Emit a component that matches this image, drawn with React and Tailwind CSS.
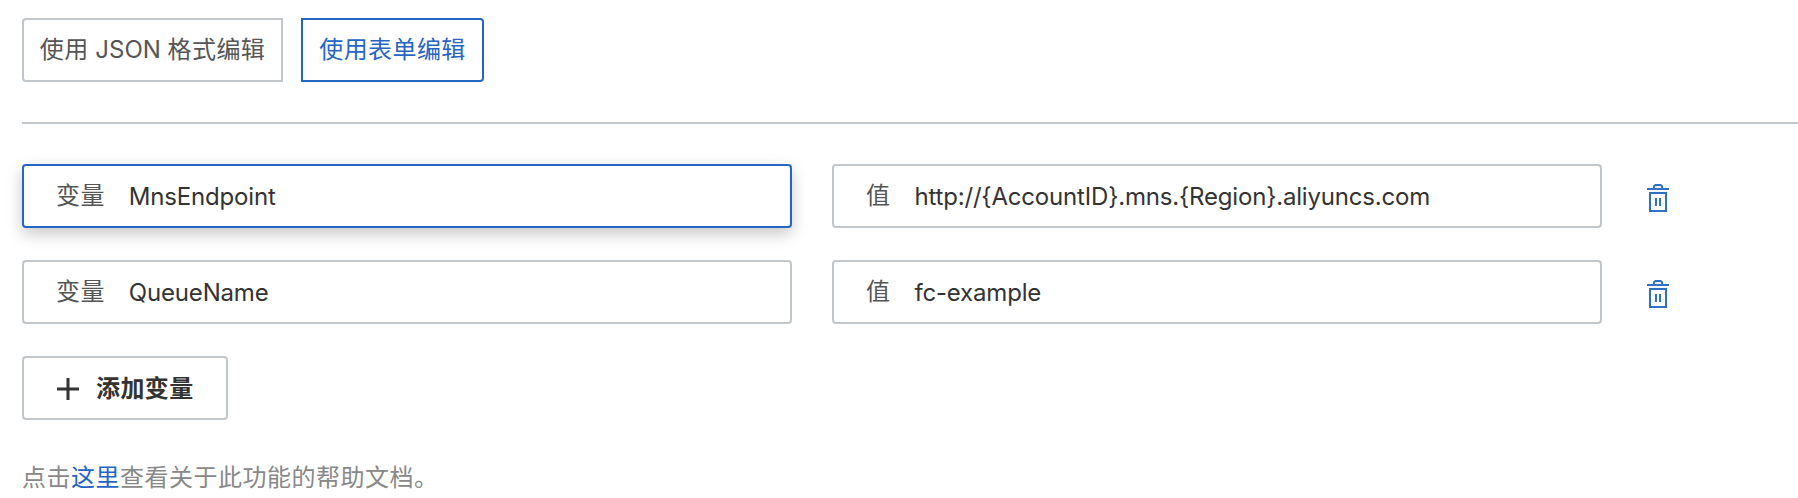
const rows = [
  { name: "MnsEndpoint", value: "http://{AccountID}.mns.{Region}.aliyuncs.com", focused: true },
  { name: "QueueName", value: "fc-example", focused: false },
];

function TrashIcon() {
  return (
    <svg width="22" height="28" viewBox="0 0 22 28" fill="none" stroke="#2f70c8" strokeWidth="2">
      <path d="M0 5h22" />
      <path d="M7 5V2.2L8.4 1h5.2L15 2.2V5" />
      <path d="M3 9h16v18H3z" />
      <path d="M9 14v8M13 14v8" />
    </svg>
  );
}

function Field({ label, value, focused }) {
  const state = focused
    ? "border-[#2765c4] shadow-[0_6px_16px_rgba(0,0,0,0.22)]"
    : "border-[#c1c6cb]";
  return (
    <label className={`flex h-16 w-[770px] items-center rounded border-2 bg-white pl-8 ${state}`}>
      <span className="tracking-[0.4px] text-[#555]">{label}</span>
      <span className="pt-0.5 pl-6 tracking-[-0.18px] text-[#333]">{value}</span>
    </label>
  );
}

export default function App() {
  return (
    <main className="h-[498px] w-full overflow-hidden bg-white pt-[18px] pl-[22px] font-['Inter','Noto_Sans_CJK_SC',sans-serif] text-[24px] leading-9 whitespace-nowrap">
      <div className="flex gap-[18px]">
        <button className="h-16 w-[261px] rounded-l border-2 border-[#c1c6cb] tracking-[0.4px] text-[#555]">
          使用<span className="tracking-[0px]"> JSON </span>格式编辑
        </button>
        <button className="h-16 w-[183px] rounded-r border-2 border-[#2765c4] tracking-[0.4px] text-[#2765c4]">
          使用表单编辑
        </button>
      </div>
      <hr className="mt-10 mb-10 border-t-2 border-[#c1c6cb]" />
      <div className="flex flex-col gap-8">
        {rows.map((row) => (
          <div key={row.name} className="flex items-center">
            <Field label="变量" value={row.name} focused={row.focused} />
            <div className="pl-10">
              <Field label="值" value={row.value} />
            </div>
            <button className="pt-1 pl-[45px]" aria-label="删除">
              <TrashIcon />
            </button>
          </div>
        ))}
      </div>
      <button className="mt-8 flex h-16 w-[206px] items-center rounded border-2 border-[#c1c6cb] pt-0.5 pl-[33px] font-bold text-[#333]">
        <svg width="22" height="22" viewBox="0 0 22 22" stroke="#333" strokeWidth="3">
          <path d="M0 11h22M11 0v22" />
        </svg>
        <span className="pl-[17px] tracking-[0.4px]">添加变量</span>
      </button>
      <p className="mt-10 tracking-[0.5px] text-[#888]">
        点击<a className="text-[#2765c4]">这里</a>查看关于此功能的帮助文档。
      </p>
    </main>
  );
}
